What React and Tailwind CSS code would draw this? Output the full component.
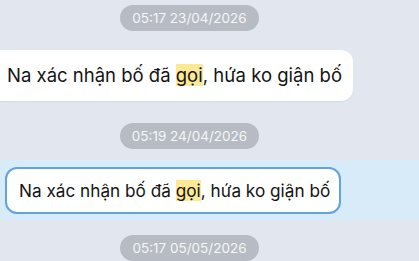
import React from "react";

const Pill = ({ children, className = "" }) => (
  <div className={`flex w-[379px] justify-center ${className}`}>
    <div className="h-[26px] rounded-full bg-[#b7bcc4] px-[12px] text-[13.5px] leading-[26px] text-[#f4f6f8]">
      {children}
    </div>
  </div>
);

const Message = () => (
  <span>
    Na xác nhận bố đã <span className="bg-[#fce996]">gọi</span>, hứa ko giận bố
  </span>
);

export default function App() {
  return (
    <div
      className="flex h-[261px] w-[419px] flex-col overflow-hidden bg-[#e2e7ef]"
      style={{ fontFamily: "Inter, 'Noto Sans', sans-serif" }}
    >
      <Pill className="mt-[5px]">05:17 23/04/2026</Pill>

      <div className="mt-[19px] flex">
        <div className="-ml-[10px] h-[51px] w-[363px] whitespace-nowrap rounded-[12px] bg-white pl-[17px] text-[18.5px] leading-[51px] text-[#141414] shadow-[0_1px_1px_rgba(0,0,0,0.06)]">
          <Message />
        </div>
      </div>

      <Pill className="mt-[22px]">05:19 24/04/2026</Pill>

      <div className="mt-[11px] flex h-[60px] items-center bg-[#d8ebf8] pl-[5px]">
        <div className="h-[47px] w-[336px] whitespace-nowrap rounded-[12px] border-2 border-[#5fa3e3] bg-white pl-[12px] text-[17.2px] leading-[43px] text-[#141414]">
          <Message />
        </div>
      </div>

      <Pill className="mt-[15px]">05:17 05/05/2026</Pill>
    </div>
  );
}
